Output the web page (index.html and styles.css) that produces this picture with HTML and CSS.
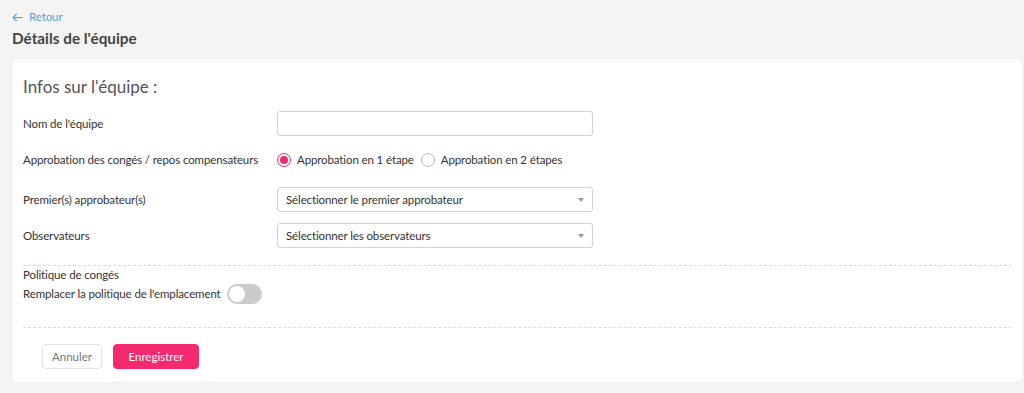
FILE: index.html
```html
<!DOCTYPE html>
<html lang="fr">
<head>
<meta charset="utf-8">
<title>Détails de l'équipe</title>
<link rel="stylesheet" href="styles.css">
</head>
<body>
<div class="page">
  <a class="back" href="#"><svg class="back-icon" width="11" height="9" viewBox="0 0 11 9"><path d="M10.5 4.5H1M4.8 0.8L1 4.5l3.8 3.7" fill="none" stroke="currentColor" stroke-width="1.1"/></svg>Retour</a>
  <h1 class="page-title">Détails de l'équipe</h1>
  <div class="card">
    <h2 class="card-title">Infos sur l'équipe :</h2>
    <div class="form">
      <div class="row row-input">
        <label class="label">Nom de l'équipe</label>
        <input class="field" type="text">
      </div>
      <div class="row row-radio">
        <span class="label">Approbation des congés / repos compensateurs</span>
        <div class="radios">
          <span class="radio checked"></span><span class="radio-text">Approbation en 1 étape</span>
          <span class="radio"></span><span class="radio-text">Approbation en 2 étapes</span>
        </div>
      </div>
      <div class="row row-select">
        <span class="label">Premier(s) approbateur(s)</span>
        <div class="field select"><span>Sélectionner le premier approbateur</span><span class="caret"></span></div>
      </div>
      <div class="row row-select">
        <span class="label">Observateurs</span>
        <div class="field select"><span>Sélectionner les observateurs</span><span class="caret"></span></div>
      </div>
    </div>
    <div class="policy">
      <div class="policy-title">Politique de congés</div>
      <div class="policy-row"><span>Remplacer la politique de l'emplacement</span><span class="toggle"><span class="knob"></span></span></div>
    </div>
    <div class="footer">
      <button class="btn btn-cancel">Annuler</button>
      <button class="btn btn-save">Enregistrer</button>
    </div>
  </div>
</div>
</body>
</html>
```
FILE: styles.css
```css
* { box-sizing: border-box; }
html, body { margin: 0; padding: 0; }
body {
  background: #f4f4f4;
  font-family: Lato, "Liberation Sans", Arial, sans-serif;
  color: #333;
  width: 1024px;
  height: 393px;
  overflow: hidden;
}
.page { padding: 9px 2px 0 12px; }
.back {
  display: flex;
  align-items: center;
  gap: 6px;
  color: #4aa3df;
  font-size: 11.5px;
  letter-spacing: -0.1px;
  line-height: 16px;
  text-decoration: none;
}
.back-icon { display: block; }
.page-title {
  margin: 3px 0 0;
  font-size: 15.3px;
  line-height: 20px;
  font-weight: bold;
  color: #444;
}
.card {
  margin-top: 11px;
  background: #fff;
  border-radius: 6px;
  box-shadow: 0 0 3px rgba(0,0,0,0.05);
  padding: 18px 10px 13px 11px;
  height: 323px;
}
.card-title {
  margin: 0;
  font-size: 17px;
  line-height: 20px;
  font-weight: normal;
  color: #555;
}
.form { margin-top: 14px; padding-bottom: 17px; border-bottom: 1px dashed #d9dde4; }
.row {
  display: grid;
  grid-template-columns: 254px 316px;
  align-items: center;
  height: 25px;
  font-size: 11.5px;
  letter-spacing: -0.12px;
  color: #333;
}
.row-input { margin-bottom: 11px; }
.row-radio { margin-bottom: 15px; }
.row-select + .row-select { margin-top: 11px; }
.field {
  height: 25px;
  width: 316px;
  border: 1px solid #cfd3d8;
  border-radius: 3px;
  background: #fff;
  font: inherit;
  padding: 0 8px;
}
.select {
  display: flex;
  align-items: center;
  justify-content: space-between;
  color: #333;
}
.caret {
  width: 0; height: 0;
  border-left: 3.5px solid transparent;
  border-right: 3.5px solid transparent;
  border-top: 4px solid #999;
  margin-right: 0;
}
.radios { display: flex; align-items: center; }
.radio {
  width: 14px; height: 14px;
  border: 1px solid #bbb;
  border-radius: 50%;
  margin-right: 6px;
  display: flex; align-items: center; justify-content: center;
}
.radio.checked { border-color: #ee2a68; }
.radio.checked::after {
  content: "";
  width: 8px; height: 8px;
  border-radius: 50%;
  background: #ee2a68;
}
.radio-text { margin-right: 7px; }
.policy {
  padding: 0 0 23px;
  border-bottom: 1px dashed #d9dde4;
  font-size: 11.5px;
  letter-spacing: -0.12px;
  color: #333;
}
.policy-title { line-height: 18px; }
.policy-row { display: flex; align-items: center; gap: 6px; line-height: 20px; }
.toggle {
  width: 35px; height: 20px;
  border-radius: 10px;
  background: #cbcbcb;
  padding: 2px;
  display: flex;
}
.knob { width: 16px; height: 16px; border-radius: 50%; background: #fff; }
.footer { display: flex; gap: 11px; padding: 16px 0 0 19px; }
.btn {
  height: 25px;
  border-radius: 4px;
  font: inherit;
  font-size: 11.5px;
  padding: 0;
  cursor: pointer;
}
.btn-cancel { width: 60px; background: #fff; border: 1px solid #e2e2e2; color: #777; }
.btn-save { width: 86px; background: #f5296f; border: 1px solid #f5296f; color: #fff; }
```
